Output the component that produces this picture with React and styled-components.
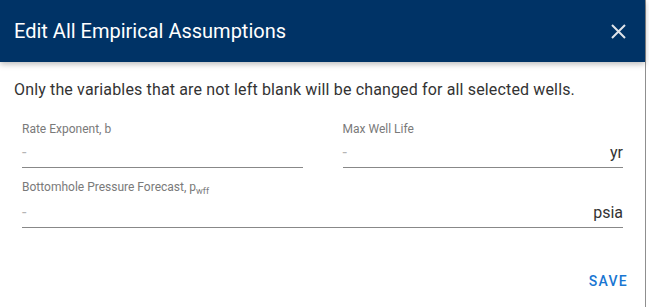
import React from 'react';
import styled, { createGlobalStyle } from 'styled-components';

const GlobalStyle = createGlobalStyle`
	html, body {
		margin: 0;
		padding: 0;
		background: #ffffff;
		font-family: Roboto, "Liberation Sans", Arial, sans-serif;
	}
`;

const Dialog = styled.div`
	width: 646px;
	height: 307px;
	box-sizing: border-box;
	border-right: 1px solid #8f8f8f;
	background: #ffffff;
	display: flex;
	flex-direction: column;
`;

const Header = styled.div`
	height: 62px;
	flex-shrink: 0;
	background: #003366;
	display: flex;
	align-items: center;
	justify-content: space-between;
	padding: 0 18px 0 14px;
	box-shadow: 0 2px 6px rgba(0, 0, 0, 0.28);
	position: relative;
	z-index: 1;
`;

const Title = styled.h2`
	margin: 0;
	font-size: 20px;
	font-weight: 400;
	color: #ffffff;
	padding-bottom: 1px;
`;

const CloseButton = styled.button`
	border: none;
	background: none;
	padding: 0;
	width: 18px;
	height: 18px;
	display: flex;
	align-items: center;
	justify-content: center;
	cursor: pointer;
`;

const Body = styled.div`
	flex: 1;
	padding: 18px 22px 0 14px;
`;

const Intro = styled.p`
	margin: 0 0 22px;
	font-size: 16px;
	line-height: 20px;
	letter-spacing: 0.15px;
	color: #333333;
`;

const FieldGrid = styled.div`
	display: grid;
	grid-template-columns: 1fr 1fr;
	column-gap: 40px;
	row-gap: 12px;
	padding-left: 8px;
`;

const Field = styled.div`
	grid-column: ${(p) => (p.$wide ? '1 / span 2' : 'auto')};
	display: flex;
	flex-direction: column;
`;

const Label = styled.label`
	font-size: 12px;
	line-height: 14px;
	color: #7a7a7a;
	height: ${(p) => (p.$tall ? '16px' : '14px')};
`;

const Sub = styled.sub`
	font-size: 9px;
	vertical-align: -3px;
	line-height: 0;
`;

const InputRow = styled.div`
	display: flex;
	align-items: center;
	padding: 7px 0 4px;
	border-bottom: 1px solid #888888;
`;

const Value = styled.span`
	flex: 1;
	font-size: 16px;
	line-height: 20px;
	color: #b5b5b5;
`;

const Unit = styled.span`
	font-size: 16px;
	line-height: 20px;
	color: #333333;
`;

const Actions = styled.div`
	display: flex;
	justify-content: flex-end;
	padding: 0 17px 18px 0;
`;

const SaveButton = styled.button`
	border: none;
	background: none;
	padding: 0;
	font-family: inherit;
	font-size: 14px;
	font-weight: 500;
	letter-spacing: 1.3px;
	color: #1976d2;
	cursor: pointer;
`;

export default function App() {
	return (
		<>
			<GlobalStyle />
			<Dialog>
				<Header>
					<Title>Edit All Empirical Assumptions</Title>
					<CloseButton aria-label="close">
						<svg width="15" height="15" viewBox="0 0 15 15">
							<path d="M1 1 L14 14 M14 1 L1 14" stroke="#dfe4ea" strokeWidth="2" />
						</svg>
					</CloseButton>
				</Header>
				<Body>
					<Intro>Only the variables that are not left blank will be changed for all selected wells.</Intro>
					<FieldGrid>
						<Field>
							<Label>Rate Exponent, b</Label>
							<InputRow>
								<Value>-</Value>
							</InputRow>
						</Field>
						<Field>
							<Label>Max Well Life</Label>
							<InputRow>
								<Value>-</Value>
								<Unit>yr</Unit>
							</InputRow>
						</Field>
						<Field $wide>
							<Label $tall>
								Bottomhole Pressure Forecast, p<Sub>wff</Sub>
							</Label>
							<InputRow>
								<Value>-</Value>
								<Unit>psia</Unit>
							</InputRow>
						</Field>
					</FieldGrid>
				</Body>
				<Actions>
					<SaveButton>SAVE</SaveButton>
				</Actions>
			</Dialog>
		</>
	);
}
